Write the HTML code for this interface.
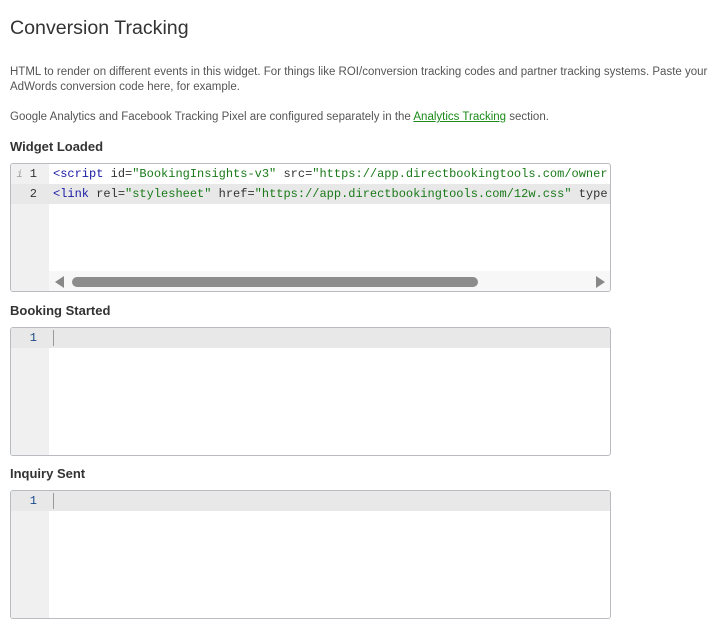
<!DOCTYPE html>
<html><head><style>
body{margin:0;background:#fff;font-family:"Liberation Sans",Arial,sans-serif;width:723px;height:635px;overflow:hidden;position:relative}
.a{position:absolute;white-space:nowrap}
h1{position:absolute;left:10px;top:17px;margin:0;font-size:19.6px;font-weight:normal;color:#333}
.p{font-size:11.5px;color:#555;left:10px}
.p a{color:#1a8a1a;text-decoration:underline}
.h{font-size:13px;font-weight:bold;color:#333;left:10px}
.ed{position:absolute;left:10px;width:599px;height:127px;border:1px solid #b8bcc0;border-radius:3px;background:#fff;overflow:hidden}
.gut{position:absolute;left:0;top:0;bottom:0;width:38px;background:#f0f0f0}
.ln{position:absolute;left:0;width:599px;height:20px;font-family:"Liberation Mono",monospace;font-size:12px;line-height:20px}
.ln .n{position:absolute;left:0;width:26px;text-align:right;color:#333}
.ln .c{position:absolute;left:42px;color:#333;white-space:pre}
.hl{background:#e8e8e8}
.t{color:#1a1aa6}.s{color:#1a7a1a}
</style></head><body>
<h1>Conversion Tracking</h1>
<div class="a p" style="top:66px">HTML to render on different events in this widget. For things like ROI/conversion tracking codes and partner tracking systems. Paste your</div>
<div class="a p" style="top:81px">AdWords conversion code here, for example.</div>
<div class="a p" style="top:111px">Google Analytics and Facebook Tracking Pixel are configured separately in the <a>Analytics Tracking</a> section.</div>

<div class="a h" style="top:139px">Widget Loaded</div>
<div class="ed" style="top:163px">
<div class="gut"></div>
<div class="ln" style="top:0"><span class="n"><span style="color:#999;font-size:10px;font-style:italic">i</span> 1</span><span class="c"><span class="t">&lt;script</span> id=<span class="s">"BookingInsights-v3"</span> src=<span class="s">"https://app.directbookingtools.com/owner</span></span></div>
<div class="ln hl" style="top:20px"><span class="n">2</span><span class="c"><span class="t">&lt;link</span> rel=<span class="s">"stylesheet"</span> href=<span class="s">"https://app.directbookingtools.com/12w.css"</span> type</span></div>
<div style="position:absolute;left:38px;right:0;top:107px;height:20px;background:#f7f7f7"></div>
<div style="position:absolute;left:44px;top:112px;width:0;height:0;border-top:6px solid transparent;border-bottom:6px solid transparent;border-right:9px solid #888"></div>
<div style="position:absolute;left:61px;top:113px;width:406px;height:10px;border-radius:5px;background:#8c8c8c"></div>
<div style="position:absolute;left:585px;top:112px;width:0;height:0;border-top:6px solid transparent;border-bottom:6px solid transparent;border-left:9px solid #888"></div>
</div>

<div class="a h" style="top:303px">Booking Started</div>
<div class="ed" style="top:327px">
<div class="gut"></div>
<div class="ln hl" style="top:0"><span class="n" style="color:#1a4a8a">1</span><span class="c" style="left:42px;border-left:1px solid #999;height:16px;top:2px"></span></div>
</div>

<div class="a h" style="top:466px">Inquiry Sent</div>
<div class="ed" style="top:490px">
<div class="gut"></div>
<div class="ln hl" style="top:0"><span class="n" style="color:#1a4a8a">1</span><span class="c" style="left:42px;border-left:1px solid #999;height:16px;top:2px"></span></div>
</div>
</body></html>
